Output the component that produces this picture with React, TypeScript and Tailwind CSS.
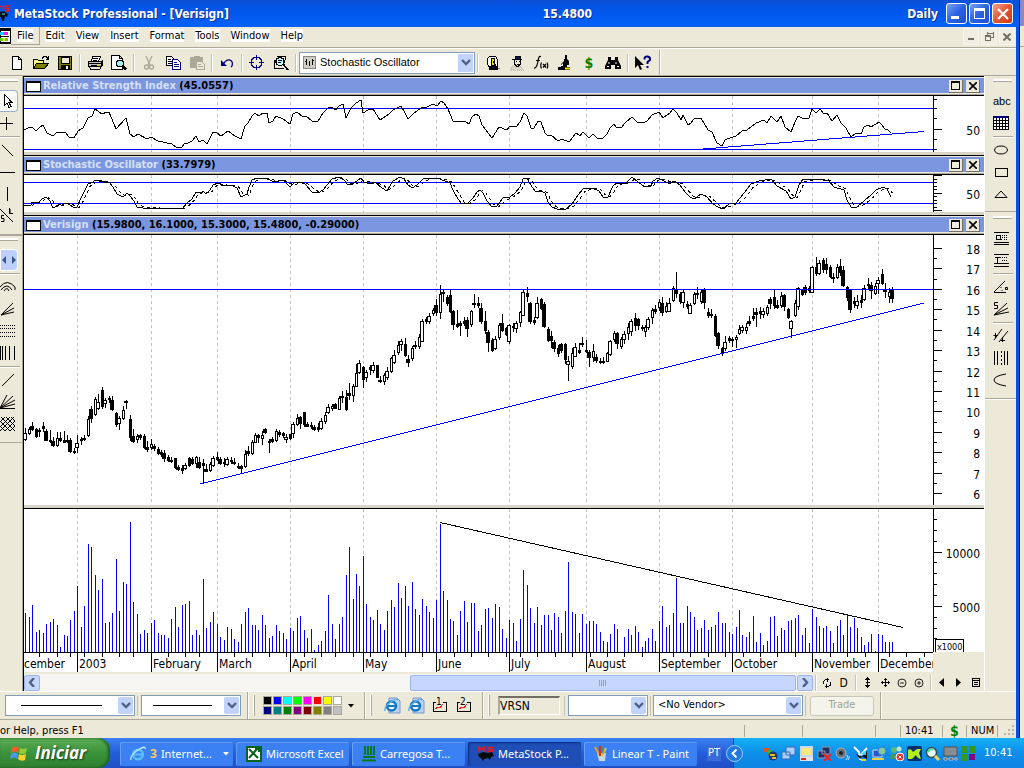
import type { ReactNode } from "react";

const FIRST_X = 25.2;
const BAR_STEP = 3.482;
const barX = (i: number) => Math.round(FIRST_X + i * BAR_STEP);

const months = [
  { name: "December", x: 24 },
  { name: "2003", x: 77 },
  { name: "February", x: 151 },
  { name: "March", x: 217 },
  { name: "April", x: 290 },
  { name: "May", x: 363 },
  { name: "June", x: 436 },
  { name: "July", x: 509 },
  { name: "August", x: 586 },
  { name: "September", x: 659 },
  { name: "October", x: 732 },
  { name: "November", x: 812 },
  { name: "December", x: 878 },
];

const monthColumns = months.map((m, i) => `minmax(0, ${(months[i + 1]?.x ?? 933) - m.x}fr)`).join(" ");

const weekTicks = [
  39, 57, 70, 84, 102, 119, 133, 168, 185, 199, 234, 252, 269, 286, 304, 321, 335, 353, 370, 387, 405, 422, 454, 471,
  488, 506, 520, 537, 555, 572, 590, 607, 624, 642, 673, 690, 708, 725, 743, 760, 777, 795, 830, 847, 865, 889, 906, 924,
];

const volume = [
  39, 35, 47, 20, 22, 19, 28, 30, 33, 27, 5, 17, 16, 32, 41, 66, 25, 46, 108, 105, 77, 62, 73, 29, 30, 39, 93, 41, 70, 68,
  130, 50, 38, 18, 22, 19, 29, 32, 19, 17, 17, 14, 33, 45, 25, 47, 48, 51, 17, 22, 17, 73, 24, 30, 40, 28, 15, 12, 25, 23,
  13, 10, 28, 40, 44, 27, 27, 22, 37, 27, 14, 16, 27, 21, 19, 13, 24, 21, 34, 36, 22, 14, 23, 2, 7, 11, 21, 57, 28, 13,
  28, 35, 77, 105, 53, 78, 66, 96, 48, 35, 32, 42, 28, 22, 41, 52, 45, 69, 54, 66, 46, 70, 43, 37, 53, 46, 40, 34, 52, 128,
  61, 52, 33, 31, 17, 41, 51, 30, 49, 49, 21, 27, 43, 44, 34, 48, 45, 23, 14, 32, 29, 11, 33, 82, 67, 44, 29, 45, 27, 37,
  37, 22, 39, 35, 19, 41, 90, 40, 38, 19, 38, 28, 31, 31, 28, 20, 11, 10, 18, 28, 23, 0, 15, 23, 17, 26, 20, 5, 11, 14,
  23, 11, 31, 46, 25, 27, 39, 74, 29, 29, 46, 40, 35, 22, 24, 32, 22, 25, 27, 40, 29, 29, 20, 18, 25, 42, 17, 15, 20, 36,
  10, 19, 7, 11, 35, 36, 16, 24, 22, 31, 32, 34, 37, 17, 24, 9, 43, 35, 26, 24, 26, 21, 9, 26, 32, 17, 37, 25, 34, 24,
  15, 7, 10, 18, 1, 18, 17, 10, 10, 10,
];

// high, body top, body bottom, low; "o" marks a hollow body
const candles = `
193,198,204,205o 192,194,198,199o 187,191,194,195 193,194,201,202 193,195,196,201 187,191,193,196 194,196,205,205
195,205,206,207 202,206,210,211 197,203,210,211o 197,203,205,206 196,205,207,207 200,205,206,207 203,205,216,217
213,216,217,218 200,208,212,217o 202,204,205,209 200,203,204,205 181,184,200,201o 171,174,183,187 162,164,179,180o
159,167,173,174o 152,155,171,173 163,165,168,172o 161,163,164,167 161,165,174,175 177,178,189,191 181,183,188,194o
171,175,183,184o 165,166,167,173 180,184,202,205 194,201,206,207 199,201,204,207o 199,200,202,204 199,201,212,213
206,212,214,216 204,209,212,214o 209,211,213,215 212,214,218,219 215,217,219,221 215,218,223,226 220,222,225,226
222,225,226,227 223,223,232,233 230,232,234,235 230,233,235,238 228,230,233,234o 222,223,230,231 222,224,228,229
221,222,228,232o 222,227,232,233 224,228,230,247 229,234,236,236 227,229,235,236o 221,223,230,231o 217,222,224,225
222,224,228,229 223,227,228,231 222,224,229,230o 222,225,226,228 223,227,228,229 228,231,232,233 230,231,233,238
215,219,231,232o 211,216,218,220 205,207,218,219o 198,200,207,207o 199,200,202,207 196,200,203,209o 193,194,197,198
204,206,207,217 202,204,206,207 194,196,205,206o 195,197,199,201 197,198,200,202 199,202,204,207o 199,199,203,204
187,189,198,202o 179,183,189,190o 181,182,188,193 177,177,189,191 187,189,191,191 187,190,191,193 190,192,194,195
188,192,194,196 183,186,193,194o 177,180,186,188o 169,172,177,178o 169,171,173,175o 168,169,173,173 161,163,174,174o
156,161,162,167 155,162,174,175 148,158,160,164 149,151,160,166o 129,138,151,151o 125,128,137,138o 131,132,144,152
135,137,142,146o 130,132,134,139 127,130,135,137o 130,130,142,142 141,145,146,147 138,140,146,149o 132,136,142,144o
122,123,136,137o 115,120,127,128o 106,110,117,119o 104,106,109,115o 103,109,120,121 120,124,127,131 111,113,123,125o
106,110,111,113 99,102,111,113o 84,86,106,106o 82,84,86,88 78,81,86,88o 73,75,78,80o 64,70,77,80 50,59,77,83o
55,57,58,66 60,62,68,70 55,60,76,77 75,76,89,94 75,89,91,92 86,88,90,100 82,86,88,90 82,85,93,101 75,76,89,91o
59,68,69,72 62,68,70,72 68,73,86,88 76,86,95,98 95,97,107,116 103,105,115,116 101,104,113,114o 88,90,102,104o
79,88,95,96 92,93,99,100 89,90,106,108o 88,91,92,96 86,88,93,97o 76,77,87,91o 54,57,80,80o 52,58,61,66 67,68,86,88
82,85,87,89 62,68,82,83o 63,64,73,74 67,69,91,92 92,94,105,106 96,101,105,112 105,107,113,116 110,113,118,121
108,109,115,117 108,109,124,128 121,126,129,145o 113,118,131,133o 108,112,121,121o 108,115,117,118 102,108,109,111
105,115,116,117 115,117,122,131 109,116,122,126o 119,122,125,127 123,126,127,128 122,126,127,128 117,118,126,126o
105,106,119,120o 96,98,104,106o 97,98,108,113 102,104,111,113o 96,99,104,108o 88,92,98,104o 84,86,96,100o 78,83,90,95
83,84,90,94 90,92,93,95 90,92,96,101o 82,84,92,94o 73,75,82,88o 70,74,76,78 64,67,72,75o 62,68,77,80 67,71,76,77o
63,68,76,76o 51,53,65,66o 37,54,58,62 57,59,66,68 55,57,67,72o 66,69,71,73 68,70,78,78o 57,59,68,69o 52,58,59,63
55,57,66,68o 53,54,67,73 73,77,80,82 74,79,80,82 79,81,100,101 97,98,110,113 112,113,118,120 101,107,113,115o
101,103,105,107 102,104,105,111 100,102,104,112o 90,94,98,99o 90,92,95,97o 88,92,95,98o 81,86,88,90 73,81,83,85
73,77,79,91 72,76,78,83 73,76,79,82o 70,72,78,80o 62,64,68,73 55,62,70,73 65,70,72,73 57,61,70,72o 59,60,71,75
73,74,82,83 85,86,93,102o 65,68,80,81o 52,53,71,74o 54,55,59,60 50,52,57,59 51,53,55,57 31,32,57,57o 22,32,38,40
25,28,38,39o 23,25,34,37 23,29,34,38 30,32,41,42 38,42,43,47 29,32,42,43o 24,31,37,40 31,35,50,51 51,52,62,65
54,54,74,77 62,66,68,72 60,66,70,73o 60,65,67,72 50,53,64,65o 43,49,50,53 47,50,55,63 48,51,58,59o 42,45,48,58o
34,39,48,49 48,54,56,62 53,57,61,67o 52,54,63,67`
  .trim()
  .split(/\s+/)
  .map((row) => {
    const [high, top, bottom, low] = row.replace("o", "").split(",").map(Number);
    return { high, top, bottom, low, hollow: row.endsWith("o") };
  });

const rsi =
  "24,130 28,128 32,127 36,131 40,127 43,125 47,133 53,136 57,132 61,133 65,132 69,137 74,138 78,131 83,128 88,118 92,116 95,109 102,114 107,112 109,112 116,129 126,118 130,134 134,137 138,134 147,139 151,137 158,141 172,144 176,147 182,147 184,144 188,143 192,141 196,136 199,142 203,140 207,144 213,132 217,133 221,136 228,131 235,136 241,139 245,126 248,123 252,116 255,113 259,116 263,113 267,113 269,123 273,121 276,116 283,119 290,124 293,114 297,112 303,117 306,116 312,121 318,121 323,113 329,107 333,108 336,110 339,106 343,104 346,118 351,108 356,103 361,100 363,113 368,110 373,109 380,120 389,114 393,110 401,106 405,113 408,119 413,114 422,107 427,107 433,104 437,106 441,101 444,103 448,109 453,121 461,122 465,121 469,124 472,117 476,114 479,116 482,125 492,138 499,127 507,130 510,126 517,126 520,122 524,113 527,116 531,128 534,128 538,121 541,122 545,133 548,136 551,135 558,141 562,139 569,142 576,133 580,136 583,132 589,138 593,134 597,138 603,138 607,134 610,128 614,124 617,128 622,127 625,123 632,117 637,122 643,123 647,121 652,115 659,112 663,118 667,115 670,113 673,109 677,113 681,120 683,115 688,125 691,123 694,119 701,118 708,130 712,132 717,143 722,146 725,140 727,139 736,136 742,131 747,130 756,123 764,120 767,123 771,116 777,122 781,116 785,127 791,132 795,122 798,116 802,118 809,118 812,109 816,113 820,109 824,114 827,113 832,121 837,115 841,123 846,128 851,137 856,133 861,134 864,127 868,125 871,127 879,122 882,125 885,129 887,129 891,133";

const stochastic =
  "24,205 31,205 32,202 36,203 39,202 42,199 46,197 50,201 53,208 57,206 60,204 62,206 64,203 68,204 75,208 77,207 81,198 85,190 88,184 93,182 95,180 99,181 110,183 113,187 117,194 123,197 127,193 130,196 134,201 137,207 143,208 158,208 161,209 165,208 182,209 187,203 192,199 196,192 202,192 203,191 206,194 210,190 213,185 218,183 223,186 228,185 233,186 237,188 241,197 247,194 249,187 252,180 257,178 267,179 275,182 283,180 290,187 295,182 300,182 305,184 312,192 318,193 323,190 327,185 332,179 339,177 344,180 348,185 353,184 361,178 364,182 370,184 375,182 382,188 387,191 393,181 400,177 404,179 408,185 412,188 417,185 423,179 430,178 437,178 445,181 450,183 453,190 458,199 462,204 468,203 473,198 477,192 480,190 483,193 487,201 492,207 497,206 503,198 510,197 515,193 520,187 523,179 527,178 532,187 536,192 541,191 545,193 548,202 552,207 557,209 566,209 572,204 578,195 583,189 592,188 599,191 603,197 608,197 613,186 617,183 625,184 632,177 638,182 645,187 651,186 653,181 658,178 664,181 670,184 674,181 680,185 685,192 690,197 694,199 701,194 707,197 713,204 718,207 723,209 729,204 736,203 744,193 751,184 759,181 771,179 777,186 786,191 791,199 795,197 799,185 803,179 817,179 829,181 834,187 844,190 847,200 851,207 857,207 864,201 871,195 876,190 883,187 887,189 891,197";

const signal = stochastic
  .split(" ")
  .map((p) => p.split(",").map(Number))
  .map(([x, y], i, all) => {
    const prev = all[Math.max(0, i - 1)];
    return `${x + 2},${(y * 0.6 + prev[1] * 0.4).toFixed(1)}`;
  })
  .join(" ");

function Ico({ w = 16, h = 16, children }: { w?: number; h?: number; children: ReactNode }) {
  return (
    <svg width={w} height={h} viewBox={`0 0 ${w} ${h}`} fill="none" stroke="#000" shapeRendering="crispEdges" className="shrink-0" aria-hidden="true">
      {children}
    </svg>
  );
}

/* ---------- charts ---------- */

function Plot({ top, height, children }: { top: number; height: number; children: ReactNode }) {
  return (
    <svg
      viewBox={`24 ${top} 909 ${height}`}
      preserveAspectRatio="none"
      height={height}
      className="block min-w-0 flex-1"
      shapeRendering="crispEdges"
      fill="none"
    >
      {months.slice(1).map((m) => (
        <path key={m.x} d={`M${m.x + 0.5} ${top}v${height}`} stroke="#c0c0c0" strokeDasharray="3 3" />
      ))}
      {children}
    </svg>
  );
}

function Candles() {
  return candles.map((c, i) => {
    const x = barX(i);
    // bodies take the whole slot, so they are one pixel wider before a four pixel step
    const width = barX(i + 1) - x;
    const left = x + 2 - width;
    return (
      <g key={i}>
        <rect x={x} y={c.high} width="1" height={c.low - c.high + 1} fill="#000" />
        {c.hollow ? (
          <rect x={left + 0.5} y={c.top + 0.5} width={width - 1} height={Math.max(1, c.bottom - c.top)} fill="#fff" stroke="#000" />
        ) : (
          <rect x={left} y={c.top} width={width} height={c.bottom - c.top + 1} fill="#000" />
        )}
      </g>
    );
  });
}

type AxisTick = { y: number; label?: string; major?: boolean };

function Axis({ height, ticks, children }: { height: number; ticks: AxisTick[]; children?: ReactNode }) {
  return (
    <svg width="51" height={height} className="block shrink-0" shapeRendering="crispEdges">
      <path d={`M.5 0v${height}`} stroke="#000" />
      {ticks.map((t) => (
        <g key={t.y}>
          <path d={`M1 ${t.y + 0.5}h${t.label || t.major ? 8 : 3}`} stroke="#000" />
          {t.label && (
            <text x="47" y={t.y + 6} textAnchor="end" className="text-xs">
              {t.label}
            </text>
          )}
        </g>
      ))}
      {children}
    </svg>
  );
}

function PanelTitle({ name, values }: { name: string; values: string }) {
  return (
    <div className="flex h-5 items-center border-y border-black bg-[#7b96df] shadow-[inset_0_1px_#ece9d8,inset_0_-1px_#aca899,inset_0_-2px_#ece9d8]">
      <span className="ml-0.5 h-[11px] w-[15px] border border-t-2 border-black bg-white" />
      <h2 className="ml-0.5 flex-1 text-[11px] leading-4 font-bold">
        <span className="text-[#d4e0f8]">{name}</span> {values}
      </h2>
      <button aria-label={`Maximize ${name}`} className="mr-[3px] flex h-[13px] w-[14px] items-center justify-center border-r border-b border-[#716f64] bg-[#ece9d8]">
        <Ico w={9} h={9}>
          <path d="M.5 1v7.500h8V1M0 1h9" />
          <path d="M0 .5h9" />
        </Ico>
      </button>
      <button aria-label={`Close ${name}`} className="mr-1 flex h-[13px] w-[14px] items-center justify-center border-r border-b border-[#716f64] bg-[#ece9d8]">
        <svg width="8" height="8" viewBox="0 0 8 8" stroke="#000" strokeWidth="1.600">
          <path d="M0 0l8 8M8 0L0 8" />
        </svg>
      </button>
    </div>
  );
}

function Panel({ children }: { children: ReactNode }) {
  return <div className="flex border-b-[3px] border-[#d8d5c6] bg-white">{children}</div>;
}

function Charts() {
  return (
    <div className="min-w-0 flex-1 border-l border-black bg-[#ece9d8]">
      <PanelTitle name="Relative Strength Index" values="(45.0557)" />
      <Panel>
        <Plot top={96} height={56}>
          <path d="M24 108.500h909M24 149.500h909M697 149.500L924 131.500" stroke="#0000ff" />
          <polyline points={rsi} stroke="#000" />
        </Plot>
        <Axis height={56} ticks={[{ y: 3 }, { y: 12 }, { y: 22 }, { y: 33, label: "50" }, { y: 43 }, { y: 53 }]} />
      </Panel>
      <PanelTitle name="Stochastic Oscillator" values="(33.7979)" />
      <Panel>
        <Plot top={175} height={37}>
          <path d="M24 182.500h909M24 203.500h909" stroke="#0000ff" />
          <polyline points={stochastic} stroke="#000" />
          <polyline points={signal} stroke="#000" strokeDasharray="3 3" />
        </Plot>
        <Axis
          height={37}
          ticks={[
            { y: 0, major: true },
            { y: 4 },
            { y: 7 },
            { y: 11 },
            { y: 14 },
            { y: 18, label: "50" },
            { y: 21 },
            { y: 25 },
            { y: 28 },
            { y: 32 },
            { y: 35, major: true },
          ]}
        />
      </Panel>
      <PanelTitle name="Verisign" values="(15.9800, 16.1000, 15.3000, 15.4800, -0.29000)" />
      <Panel>
        <Plot top={0} height={270}>
          <Candles />
          <path d="M24 54.500h909M200 249L924 68" stroke="#0000ff" />
        </Plot>
        <Axis
          height={270}
          ticks={Array.from({ length: 25 }, (_, i) => ({
            y: Math.round(13 + i * 10.21),
            label: i % 2 === 0 ? String(18 - i / 2) : undefined,
          }))}
        />
      </Panel>
      <div className="flex border-t border-black bg-white">
        <Plot top={0} height={143}>
          {volume.map((v, i) => (
            <rect key={i} x={barX(i)} y={143 - v} width="1" height={v} fill="#0000ff" />
          ))}
          <path d="M440 13.500L903 118.500" stroke="#000" />
        </Plot>
        <Axis
          height={143}
          ticks={Array.from({ length: 12 }, (_, i) => ({
            y: Math.round(10 + i * 10.85),
            label: i === 3 ? "10000" : i === 8 ? "5000" : undefined,
          }))}
        >
          <path d="M2.500 143v-12.500h27.500v12.500" stroke="#000" fill="#fff" />
          <text x="4" y="141" className="text-[9px]">
            x1000
          </text>
        </Axis>
      </div>
      <div className="mr-[51px] border-t border-black bg-white">
        <svg viewBox="24 0 909 4" preserveAspectRatio="none" height="4" className="block w-full" shapeRendering="crispEdges" stroke="#000">
          {weekTicks.concat(months.slice(1).map((m) => m.x)).map((x) => (
            <path key={x} d={`M${x + 0.5} 0v4`} />
          ))}
        </svg>
        <div className="grid h-4 border-b border-[#ece9d8] text-xs leading-[14px]" style={{ gridTemplateColumns: monthColumns }}>
          {months.map((m, i) => (
            <div key={m.x} className={i === 0 ? "flex justify-end overflow-hidden pr-3" : "overflow-hidden border-l border-black pl-px"}>
              {m.name}
            </div>
          ))}
        </div>
      </div>
      <ScrollRow />
    </div>
  );
}

function Chevron({ d = "M1 2l4 4 4-4" }: { d?: string }) {
  return (
    <svg width="10" height="9" viewBox="0 0 10 9" fill="none" stroke="#4d6185" strokeWidth="2.400" aria-hidden="true">
      <path d={d} />
    </svg>
  );
}

function Sep() {
  return <span className="mx-0.5 h-4 w-0.5 shrink-0 border-r border-white bg-[#c5c2b8]" />;
}

function ScrollRow() {
  return (
    <div className="mt-px flex h-[17px] items-center">
      <div className="flex h-full flex-1 items-center bg-[#f6f5f1]">
        <button aria-label="Scroll left" className="flex size-4 items-center justify-center rounded-xs border border-[#9db4ea] bg-[#c6d6fc]">
          <Chevron d="M7 0L3 4.500 7 9" />
        </button>
        <div className="h-full flex-[371]" />
        <div className="flex h-4 flex-[386] items-center justify-center gap-px rounded-xs border border-[#9db4ea] bg-[#c6d6fc]">
          {[0, 1, 2, 3].map((n) => (
            <span key={n} className="h-1.5 w-px border-r border-[#8ca4dc] bg-white" />
          ))}
        </div>
        <button aria-label="Scroll right" className="ml-px flex size-4 items-center justify-center rounded-xs border border-[#9db4ea] bg-[#c6d6fc]">
          <Chevron d="M3 0l4 4.500L3 9" />
        </button>
      </div>
      <div className="flex w-[171px] items-center">
        <Sep />
        <button aria-label="Refresh" className="flex w-4 justify-center">
          <Ico w={8} h={10}>
            <path d="M.5 6V3.500l2-2H6M4.500 0v4M7.500 4v3l-2 1.500H2M3.500 6v4" />
          </Ico>
        </button>
        <button aria-label="Periodicity" className="flex w-[18px] justify-center text-xs">
          D
        </button>
        <Sep />
        <button aria-label="Rescale Y" className="flex w-[18px] justify-center">
          <Ico w={7} h={11}>
            <path d="M3.500 0v11M2 1.500h3M1 2.500h5M1 8.500h5M2 9.500h3" />
            <path d="M1.500 5.500h4" />
          </Ico>
        </button>
        <button aria-label="Rescale" className="flex w-[18px] justify-center">
          <Ico w={9} h={9}>
            <path d="M4.500 0v9M0 4.500h9M3 1.500h3M3 7.500h3M1.500 3v3M7.500 3v3" />
          </Ico>
        </button>
        {["Zoom out", "Zoom in"].map((z) => (
          <button key={z} aria-label={z} className="flex w-[17px] justify-center">
            <svg width="10" height="10" viewBox="0 0 10 10" fill="none" stroke="#222">
              <circle cx="5" cy="5" r="4" />
              <path d={z === "Zoom in" ? "M3 5h4M5 3v4" : "M3 5h4"} />
            </svg>
          </button>
        ))}
        <Sep />
        <button aria-label="Back" className="flex w-4 justify-center">
          <svg width="5" height="9">
            <path d="M5 0v9L0 4.500z" />
          </svg>
        </button>
        <button aria-label="Forward" className="flex w-[18px] justify-center">
          <svg width="5" height="9">
            <path d="M0 0v9l5-4.500z" />
          </svg>
        </button>
        <button aria-label="Layouts" className="flex w-[17px] justify-center">
          <Ico w={8} h={9}>
            <path d="M.5.5h7v8h-7zM0 2.500h8M2 4.500h4M2 6.500h4" />
          </Ico>
        </button>
      </div>
    </div>
  );
}

/* ---------- window frame ---------- */

function TitleBar() {
  return (
    <header className="flex h-[27px] items-center bg-linear-to-b from-[#0a50d8] via-[#0058ee] to-[#0462f8] text-xs font-bold text-white [text-shadow:1px_1px_#0a2f8c]">
      <svg width="10" height="17" viewBox="0 0 10 17" aria-hidden="true" className="shrink-0">
        <path d="M0 1.500h2M3.500 0v5M5 1h4M5.500 1v2.500h3.500V6H5" stroke="#f01818" strokeWidth="1.500" fill="none" />
        <path d="M0 7l4-1 4 3-1 3-2-1-1 5H2l-1-4H0z" fill="#08101c" />
        <path d="M2 8h3v2H2z" fill="#347878" />
      </svg>
      <h1 className="ml-1 flex-1">MetaStock Professional - [Verisign]</h1>
      <span>15.4800</span>
      <span className="w-[346px] text-right">Daily</span>
      <div className="mr-1.5 ml-2 flex gap-0.5">
        <button aria-label="Minimize" className="flex size-[21px] items-end rounded-[3px] border border-white bg-linear-to-br from-[#7aa0f4] via-[#2a62e0] to-[#1c50d0] p-1">
          <span className="h-[3px] w-2 bg-white" />
        </button>
        <button aria-label="Restore" className="flex size-[21px] items-center justify-center rounded-[3px] border border-white bg-linear-to-br from-[#7aa0f4] via-[#2a62e0] to-[#1c50d0]">
          <span className="h-[11px] w-[11px] border border-t-[3px] border-white" />
        </button>
        <button aria-label="Close" className="flex size-[21px] items-center justify-center rounded-[3px] border border-white bg-linear-to-br from-[#f0a088] via-[#e25630] to-[#c83c14]">
          <svg width="12" height="12" viewBox="0 0 12 12" stroke="#fff" strokeWidth="2.200">
            <path d="M1 1l10 10M11 1L1 11" />
          </svg>
        </button>
      </div>
    </header>
  );
}

function MenuBar() {
  return (
    <nav className="flex h-[22px] items-start border-b border-white bg-[#ece9d8] shadow-[inset_0_-1px_#aca899]">
      <Ico w={11} h={18}>
        <path d="M0 1.500h10.500v15H0z" fill="#fff" />
        <path d="M0 2.500h11" strokeWidth="3" />
        <path d="M0 6.500h4" stroke="#00c8f0" strokeWidth="3" />
        <path d="M4 6.500h4" stroke="#f020f0" strokeWidth="3" />
        <path d="M0 12h8" stroke="#60d020" strokeWidth="3" />
        <path d="M3 12h2" stroke="#f0e020" strokeWidth="3" />
        <path d="M0 9.500h9M0 15.500h11" />
      </Ico>
      <div className="flex flex-1">
        {["File", "Edit", "View", "Insert", "Format", "Tools", "Window", "Help"].map((m, i) => (
          <button
            key={m}
            className={
              i === 0
                ? "h-[18px] border-r border-b border-[#aca899] px-1.5 text-[11px]"
                : "h-[18px] border-b border-transparent pr-1.5 pl-[5px] text-[11px]"
            }
          >
            <span className="block bg-white leading-[13px]">{m}</span>
          </button>
        ))}
      </div>
      <div className="mt-px mr-px flex gap-0.5">
        <button aria-label="Minimize chart" className="flex h-[17px] w-4 items-end justify-center border border-[#f6f5f0] bg-[#f0eee2] pb-1">
          <span className="h-0.5 w-1.5 bg-[#716f64]" />
        </button>
        <button aria-label="Restore chart" className="flex h-[17px] w-4 items-center justify-center border border-[#f6f5f0] bg-[#f0eee2]">
          <Ico w={9} h={9}>
            <path d="M.5 4.500h5v4h-5zM0 3.500h6M2 1h7M8.500 0v5.500H6M2.500 0v3" stroke="#716f64" />
          </Ico>
        </button>
        <button aria-label="Close chart" className="flex h-[17px] w-4 items-center justify-center border border-[#f6f5f0] bg-[#f0eee2]">
          <svg width="8" height="8" viewBox="0 0 8 8" stroke="#716f64" strokeWidth="2">
            <path d="M.5.5l7 7M7.500.5l-7 7" />
          </svg>
        </button>
      </div>
    </nav>
  );
}

function Tool({ label, children }: { label: string; children: ReactNode }) {
  return (
    <button aria-label={label} className="flex size-6 shrink-0 items-center justify-center">
      {children}
    </button>
  );
}

function ToolSep() {
  return <span className="mx-[2px] h-[18px] w-0.5 shrink-0 border-r border-white bg-[#c5c2b8]" />;
}

function Toolbar() {
  return (
    <div className="flex h-[27px] items-center border-b border-[#aca899] bg-[#ece9d8] pt-px pl-[5px]">
      <Tool label="New">
        <Ico>
          <path d="M3.500 1.500h6l3 3v10h-9zM9.500 1.500v3h3" fill="#fff" />
        </Ico>
      </Tool>
      <Tool label="Open">
        <Ico>
          <path d="M.5 13.500v-9h4l1 1h5v3" fill="#ffff80" />
          <path d="M.5 13.500l3-5h12l-4 5z" fill="#808000" />
          <path d="M9 3.500l2-2h2l2 2M15.500 1v4M13 4.500h2" />
        </Ico>
      </Tool>
      <Tool label="Save">
        <Ico>
          <path d="M1.500 1.500h13v13h-13z" fill="#808000" />
          <path d="M4 2h8v6H4z" fill="#ece9d8" />
          <path d="M4 10h8v4H4z" fill="#000" />
          <path d="M10 11v3" stroke="#fff" strokeWidth="2" />
        </Ico>
      </Tool>
      <ToolSep />
      <Tool label="Print">
        <Ico>
          <path d="M4.500 6.500l1-5h8l-2 5z" fill="#fff" />
          <path d="M6 3.500h5M6 5.500h4M1.500 6.500h13v5h-13z" fill="#c0c0c0" />
          <path d="M2 8.500h12M2.500 11.500l1 3h9l2-3M15.500 5v6M4 10.500h6" />
          <path d="M11 10.500h2" stroke="#e0e000" />
        </Ico>
      </Tool>
      <Tool label="Print preview">
        <Ico>
          <path d="M.5.5h8l3 3v11H.5zM8.500.5v3h3" fill="#fff" />
          <circle cx="9" cy="8.500" r="3.500" fill="#a0f0f0" />
          <path d="M11 11l4 4M12 11l3.500 3.500" strokeWidth="2" />
        </Ico>
      </Tool>
      <ToolSep />
      <Tool label="Cut">
        <svg width="16" height="16" viewBox="0 0 16 16" fill="none" stroke="#aca899" strokeWidth="1.300">
          <path d="M5 1l4 9M11 1L7 10" />
          <circle cx="5.500" cy="12" r="2" />
          <circle cx="10.500" cy="12" r="2" />
        </svg>
      </Tool>
      <Tool label="Copy">
        <Ico>
          <path d="M1.500 1.500h5l2 2v7h-7z" fill="#fff" />
          <path d="M3 4.500h3M3 6.500h4M3 8.500h4" />
          <path d="M7.500 4.500h5l3 3v7h-8z" fill="#fff" stroke="#000080" />
          <path d="M9 7.500h3M9 9.500h5M9 11.500h5" stroke="#000080" />
        </Ico>
      </Tool>
      <Tool label="Paste">
        <Ico>
          <path d="M1.500 2.500h12v10h-12zM4.500 1.500h6" fill="#aca899" stroke="#aca899" />
          <path d="M7.500 6.500h5l3 3v5h-8z" fill="#ece9d8" stroke="#aca899" />
          <path d="M9 9.500h3M9 11.500h5" stroke="#aca899" />
        </Ico>
      </Tool>
      <ToolSep />
      <Tool label="Undo">
        <svg width="16" height="16" viewBox="0 0 16 16" fill="none" stroke="#000080" strokeWidth="1.300">
          <path d="M4 9.500Q7 4.500 10.500 5q4 1 2.500 6l-1 1" />
          <path d="M2 5v6h6z" fill="#000080" stroke="none" />
        </svg>
      </Tool>
      <ToolSep />
      <Tool label="Target">
        <Ico>
          <path d="M7.500 0v5M7.500 10v5M0 7.500h5M10 7.500h5M5 2.500h5l2.500 2.500v5L10 12.500H5L2.500 10V5z" stroke="#000080" />
        </Ico>
      </Tool>
      <Tool label="Zoom">
        <Ico>
          <path d="M3.500 1.500h9v3M1.500 5v8.500h9" fill="none" />
          <circle cx="7" cy="6.500" r="4" fill="#c0ffff" strokeWidth="1.500" />
          <path d="M10 9l5 6M5 5.500h4M5 7.500h3" strokeWidth="1.800" />
        </Ico>
      </Tool>
      <ToolSep />
      <div className="relative flex">
        <select
          aria-label="Indicator"
          className="h-[22px] w-[176px] appearance-none border border-[#7f9db9] bg-white pl-5 font-['Liberation_Sans',Arial,sans-serif] text-[11px]"
        >
          <option>Stochastic Oscillator</option>
        </select>
        <span className="pointer-events-none absolute top-1 left-1 flex bg-[#d0cec4]">
          <Ico w={13} h={13}>
            <path d="M.5.5h12v12H.5z" stroke="#888" />
            <path d="M3.500 3v6M6.500 5v5M9.500 3v6M2 5.500h2M9 4.500h2" />
          </Ico>
        </span>
        <span className="pointer-events-none absolute top-0.5 right-0.5 flex h-[18px] w-[15px] items-center justify-center bg-[#c1d3fb]">
          <Chevron />
        </span>
      </div>
      <ToolSep />
      <Tool label="Downloader">
        <Ico>
          <path d="M4.500 1.500h6l2 3v8h-8l-2-3v-6z" fill="#fff" />
          <path d="M6 3h3v7H6z" fill="#f0e000" />
          <path d="M4 11h8v3H4zM8 6l3 5" fill="#000" />
          <path d="M13 13h2" stroke="#888" />
        </Ico>
      </Tool>
      <Tool label="Expert advisor">
        <Ico>
          <path d="M1 15l3-4h8l3 4z" stroke="#b8b5a8" fill="#d8d5c8" strokeDasharray="1 1" />
          <path d="M6 1h5v3H6z" fill="#0a1a60" />
          <path d="M3 4.500h10M5.500 5v4l2 2h2l2-2V5M7 6.500h1M10 6.500h1M8 9.500h2" />
        </Ico>
      </Tool>
      <Tool label="Indicator builder">
        <svg width="16" height="16" viewBox="0 0 16 16" fill="none" stroke="#000" strokeWidth="1.200">
          <path d="M8 1.500C6 .5 5.500 3 5 6S3.500 13.500 1 13M3 5.500h4M8.500 7.500Q7 10.500 8.500 13.500M14 7.500q1.500 3 0 6M10 9l3 3.500M13 9l-3 3.500" />
        </svg>
      </Tool>
      <Tool label="Explorer">
        <svg width="16" height="16" viewBox="0 0 16 16">
          <path d="M8 0h2v4l2 2v4h-2v2h3v3H1v-3h3V9l3-3V4h1z" />
          <path d="M3 11l3-3v3z" fill="#ece9d8" />
          <path d="M8 13.500h5" stroke="#f0e000" strokeWidth="2" />
        </svg>
      </Tool>
      <Tool label="System tester">
        <span className="text-sm font-bold text-[#008000]">$</span>
      </Tool>
      <Tool label="Find">
        <svg width="16" height="14" viewBox="0 0 16 14">
          <path d="M3 1h3v3h4V1h3v3l3 6v3h-6V9H6v4H0v-3l3-6z" />
          <path d="M2 10.500h2M12 10.500h2M4 6v2M11 6v2" stroke="#fff" />
        </svg>
      </Tool>
      <ToolSep />
      <Tool label="Help">
        <svg width="18" height="16" viewBox="0 0 18 16">
          <path d="M1 1v12l3-3 2 5 2-1-2-4h4z" />
          <path d="M10.500 4.500q0-3.500 3-3t2.500 3.500l-2.500 2v2M13.500 11v2" stroke="#000080" strokeWidth="2" fill="none" />
        </svg>
      </Tool>
      <span className="ml-1 h-full w-0.5 border-r border-white bg-[#aca899]" />
    </div>
  );
}

function Grip() {
  return <div className="mr-1 mb-2 h-[3px] border-b border-[#aca899] bg-white" />;
}

function SideSep() {
  return (
    <div className="flex h-[5px] items-center">
      <div className="h-0.5 w-5 border-b border-white bg-[#aca899]" />
    </div>
  );
}

type Drawing = { name: string; d: string; dash?: string; smooth?: boolean };

function DrawTool({ name, d, dash, smooth }: Drawing) {
  return (
    <button aria-label={name} className="flex h-[22px] w-full items-center">
      <svg width="16" height="16" viewBox="0 0 16 16" fill="none" stroke="#000" shapeRendering={smooth ? "auto" : "crispEdges"} aria-hidden="true">
        <path d={d} strokeDasharray={dash} />
      </svg>
    </button>
  );
}

const lineTools: Drawing[] = [
  { name: "Trendline", d: "M2 3l11 11", smooth: true },
  { name: "Horizontal line", d: "M0 8.500h15" },
  { name: "Vertical line", d: "M7.500 1v14" },
  { name: "Trading line", d: "M0 1l13 13M9.500 0v5.500H13M10 5.500V1M4 7.500H1.500v3H4v3H1", smooth: true },
];

const studyTools: Drawing[] = [
  { name: "Fibonacci arcs", d: "M0 8q7-9 15 0v3M1 11q6-8 11 0M4 12q3-5 5 0", smooth: true },
  { name: "Fibonacci fan", d: "M1 14L13 2M1 14L14 7M1 14l13-3", smooth: true },
  { name: "Fibonacci retracement", d: "M0 2.500h15M0 5.500h15M0 9.500h15M0 13.500h15", dash: "1 1" },
  { name: "Fibonacci time zones", d: "M.5 1v14M2.500 1v14M5.500 1v14M9.500 1v14M14.500 1v14" },
];

const gannTools: Drawing[] = [
  { name: "Gann line", d: "M2 14L14 2", smooth: true },
  { name: "Gann fan", d: "M0 14.500h15M0 14L7 1M0 14L13 2M0 14L15 6M0 14l15-4", smooth: true },
  {
    name: "Gann grid",
    d: "M0 6l5-5M0 11L10 1M0 15L14 1M5 15l10-10M10 15l5-5M0 10l5 5M0 5l10 10M1 1l14 14M6 1l9 9M11 1l4 4",
    smooth: true,
  },
];

const channelTools: Drawing[] = [
  { name: "Raff channel", d: "M1 12L9 1M6 14l9-11M2.500 5v5M.5 7.500H5M9.500 9v5M7.500 12.500H12", smooth: true },
  { name: "Standard deviation channel", d: "M1.500 1v14M4.500 1v14M11.500 1v14M14.500 1v14M8.500 1v2M8.500 5v2M8.500 9v2M8.500 13v2" },
  { name: "Quadrant", d: "M13 2Q1 4 1 8t12 6", smooth: true },
];

function LeftTools() {
  return (
    <aside className="flex w-[23px] shrink-0 flex-col border-r border-[#aca899]">
      <div className="border-b-2 border-[#aca899] pt-[3px] pb-[7px]">
        <Grip />
        <button aria-label="Pointer" className="mr-1 flex h-[22px] w-[18px] items-center rounded-r-sm border-y border-r border-[#98b0cc] bg-[#fbfbf8]">
          <Ico w={14} h={16}>
            <path d="M4.500 1.500v11l2.500-2.500 2 4.500 2-1-2-4h3z" fill="#fff" />
          </Ico>
        </button>
        <DrawTool name="Crosshair" d="M0 8.500h13M6.500 2v13" />
        <SideSep />
        {lineTools.map((t) => (
          <DrawTool key={t.name} {...t} />
        ))}
      </div>
      <div className="border-b border-[#aca899] pt-0.5 pb-[7px]">
        <Grip />
        <button aria-label="Move" className="flex h-[22px] w-[18px] items-center justify-center gap-1 rounded-r-sm border border-white bg-[#bcd0fb]">
          <svg width="14" height="8" viewBox="0 0 14 8" fill="#3a5688">
            <path d="M4 0v8L0 4zM10 0v8l4-4z" />
          </svg>
        </button>
        <SideSep />
        {studyTools.map((t) => (
          <DrawTool key={t.name} {...t} />
        ))}
        <SideSep />
        {gannTools.map((t) => (
          <DrawTool key={t.name} {...t} />
        ))}
      </div>
    </aside>
  );
}

function RightTools() {
  return (
    <aside className="w-8 shrink-0 border-l border-white">
      <div className="border-b border-[#aca899] pt-[3px] pb-1.5 pl-2">
        <Grip />
        <button aria-label="Text" className="flex h-[22px] items-center font-['Liberation_Sans',Arial,sans-serif] text-[11px]">
          abc
        </button>
        <button aria-label="Grid" className="flex h-[22px] items-center">
          <Ico w={17} h={16}>
            <path d="M.5 1.500h15v13H.5z" fill="#fff" />
            <path d="M1 2h14" stroke="#000080" strokeWidth="2" />
            <path d="M0 5.500h16M0 8.500h16M0 11.500h16M3.500 3v12M6.500 3v12M9.500 3v12M12.500 3v12" />
          </Ico>
        </button>
        <SideSep />
        <button aria-label="Ellipse" className="flex h-[22px] items-center">
          <svg width="16" height="16" fill="none" stroke="#000">
            <ellipse cx="8" cy="8" rx="6.500" ry="4" />
          </svg>
        </button>
        <DrawTool name="Rectangle" d="M2.500 4.500h12v8h-12z" />
        <DrawTool name="Triangle" d="M2 11.500h12L8 5z" smooth />
      </div>
      <div className="border-b border-[#aca899] pt-1 pb-[7px] pl-2 shadow-[0_1px_#fff]">
        <Grip />
        <DrawTool name="Quote" d="M1 2.500h15M3 5.500h4v4H3zM6 9.500h3M9 5.500h1M11 5.500h1M13 5.500h1M9 7.500h1M11 7.500h1M13 7.500h1M11 9.500h1M13 9.500h1M1 14.500h15M1 12.500h15" />
        <DrawTool name="Note" d="M1 2.500h15M2 5.500h6M4.500 6v5M9 5.500h1M11 5.500h1M13 5.500h1M9 8.500h1M11 8.500h1M13 8.500h1M1 11.500h15M1 14.500h15" />
        <SideSep />
        <DrawTool name="Angle" d="M1 13.500h12M1 13L12 2M12.500 8.500h2v2h-2zM8 8v1M9 11v1" smooth />
        <DrawTool name="Speed lines" d="M1 14L14 2M1 14l14-7M1 14l15-3M5 1.500H1.500v3h3v3H1" smooth />
        <SideSep />
        {channelTools.map((t) => (
          <DrawTool key={t.name} {...t} />
        ))}
      </div>
    </aside>
  );
}

const palette = [
  "bg-[#000000]", "bg-[#0000ff]", "bg-[#00ffff]", "bg-[#00ff00]", "bg-[#ff00ff]", "bg-[#ff0000]", "bg-[#ffff00]", "bg-[#ffffff]",
  "bg-[#000080]", "bg-[#008080]", "bg-[#008000]", "bg-[#800080]", "bg-[#800000]", "bg-[#808000]", "bg-[#808080]", "bg-[#c0c0c0]",
];

function Combo({ label, width, line, children }: { label: string; width: string; line?: string; children?: ReactNode }) {
  return (
    <div className={`relative flex ${width}`}>
      <select aria-label={label} className="h-[21px] w-full appearance-none border border-[#7f9db9] bg-white pl-1 text-[11px]">
        {children}
      </select>
      {line && <span className={`pointer-events-none absolute top-2.5 h-px bg-black ${line}`} />}
      <span className="pointer-events-none absolute top-0.5 right-0.5 flex h-[17px] w-[15px] items-center justify-center rounded-xs bg-[#c1d3fb]">
        <Chevron />
      </span>
    </div>
  );
}

function BarEnd() {
  return (
    <>
      <span className="h-full w-0.5 border-r border-white bg-[#aca899]" />
      <span className="mr-2 ml-1 h-[21px] w-0.5 border-r border-[#aca899] bg-white" />
    </>
  );
}

function IeLogo() {
  return (
    <svg width="17" height="17" viewBox="0 0 17 17" fill="none" aria-hidden="true">
      <path d="M5 1h8l3 3v12H5z" fill="#bcd0f4" stroke="#7c98d0" />
      <circle cx="7.500" cy="9" r="4.500" fill="#fff" stroke="#1478c4" strokeWidth="2.600" />
      <path d="M4 9h8" stroke="#1478c4" strokeWidth="2.200" />
      <path d="M1 14Q0 10 6 5.500T14 3" stroke="#58b0e8" strokeWidth="1.300" />
    </svg>
  );
}

function BottomBar() {
  return (
    <div className="flex h-7 items-center border-t border-white bg-[#ece9d8] pl-[5px]">
      <Combo label="Line style" width="w-[130px]" line="left-4 w-[81px]" />
      <span className="mx-0.5 h-5 w-px bg-[#c5c2b8]" />
      <Combo label="Line weight" width="ml-px w-[100px]" line="left-3 w-[59px]" />
      <span className="w-1.5" />
      <BarEnd />
      <div className="grid grid-cols-8 gap-px">
        {palette.map((c, i) => (
          <button
            key={c}
            aria-label={`Colour ${i + 1}`}
            className={`size-[9px] border ${i === 5 ? "border-[#ffd8d0]" : "border-[#aca899]"} ${c}`}
          />
        ))}
      </div>
      <svg width="6" height="4" className="mx-1.5">
        <path d="M0 0h6L3 3.500z" />
      </svg>
      <span className="w-1" />
      <BarEnd />
      <button aria-label="Web page" className="flex w-6 justify-center">
        <IeLogo />
      </button>
      <button aria-label="Online" className="flex w-6 justify-center">
        <IeLogo />
      </button>
      {["1", "2"].map((n) => (
        <button key={n} aria-label={`Chart ${n}`} className="relative flex w-6 justify-center">
          <Ico w={14} h={12}>
            <path d="M3 2.500H.5v8.500h12.500V2.500H10" />
            <path d="M2 9l3-2 2 1 3-4" stroke="#e02020" />
          </Ico>
          <span className="absolute -top-1 left-2 text-[10px] leading-3">{n}</span>
        </button>
      ))}
      <span className="w-1.5" />
      <BarEnd />
      <input
        aria-label="Symbol"
        defaultValue="VRSN"
        className="h-[19px] w-[62px] border-t-2 border-r border-b border-l-2 border-t-[#716f64] border-r-white border-b-white border-l-[#aca899] bg-[#ece9d8] text-xs"
      />
      <span className="mr-[3px] ml-1 h-5 w-px bg-[#c5c2b8]" />
      <Combo label="Quantity" width="w-20" />
      <span className="mx-[2px] h-5 w-px bg-[#c5c2b8]" />
      <Combo label="Vendor" width="w-[150px]">
        <option>&lt;No Vendor&gt;</option>
      </Combo>
      <span className="mx-0.5 h-5 w-px bg-[#c5c2b8]" />
      <button className="ml-0.5 h-5 w-16 rounded-[3px] border border-[#c9c7ba] bg-[#f5f4ea] text-[11px] text-[#a1a192]">Trade</button>
      <span className="ml-1.5 h-full w-0.5 border-r border-white bg-[#aca899]" />
    </div>
  );
}

function StatusBar() {
  return (
    <footer className="flex h-[18px] items-center border-t border-[#aca899] bg-[#ece9d8] pt-1 text-[11px] leading-3">
      <span className="flex-1">or Help, press F1</span>
      <span className="h-3 w-[58px] border-l border-[#aca899]" />
      <span className="h-3 w-[73px] border-l border-[#aca899]" />
      <span className="h-3 w-[25px] border-l border-[#aca899]" />
      <span className="w-[42px] border-l border-[#aca899] pl-1">10:41</span>
      <span className="w-6 border-l border-[#aca899] text-center text-sm leading-3 font-bold text-[#008000]">$</span>
      <span className="w-[31px] border-l border-[#aca899] pl-1">NUM</span>
      <span className="h-3 w-[7px] border-l border-[#aca899]" />
      <svg width="12" height="12" className="text-[#b8b5a5]" fill="currentColor">
        <path d="M8 0h2v2H8zM4 4h2v2H4zM8 4h2v2H8zM0 8h2v2H0zM4 8h2v2H4zM8 8h2v2H8z" />
      </svg>
    </footer>
  );
}

/* ---------- taskbar ---------- */

const tasks = [
  {
    name: "Internet...",
    count: "3",
    icon: (
      <svg width="16" height="16" viewBox="0 0 16 16" fill="none">
        <circle cx="8" cy="8.500" r="4.800" stroke="#58c0f8" strokeWidth="2.600" />
        <path d="M4 8.500h9" stroke="#58c0f8" strokeWidth="2" />
        <path d="M1 14Q0 9 8 4t7-1" stroke="#c0e8ff" strokeWidth="1.300" />
      </svg>
    ),
  },
  {
    name: "Microsoft Excel",
    icon: (
      <svg width="16" height="16" viewBox="0 0 16 16">
        <path d="M0 0h16v16H0z" fill="#0a6420" />
        <path d="M2 2h12v12H2z" fill="#fff" />
        <path d="M3 3l9 9M11 3l-8 9M9 3h4v3" stroke="#0a6420" strokeWidth="2" fill="none" />
      </svg>
    ),
  },
  {
    name: "Carregosa T...",
    icon: (
      <svg width="14" height="16" viewBox="0 0 14 16" stroke="#087818" strokeWidth="2">
        <path d="M3 0v9M6 0v9M9 0v9M12 0v9M1 11h12M0 14.500h14" />
      </svg>
    ),
  },
  {
    name: "MetaStock P...",
    active: true,
    icon: (
      <svg width="16" height="16" viewBox="0 0 16 16">
        <path d="M1 6V1l2.500 3L6 1v5M15 1.500h-4v2h4v2h-5" stroke="#e81818" strokeWidth="1.500" fill="none" />
        <path d="M0 8l5-2 5 1 4-1 2 4-3 1-1 3-2-2-4 1-1 2-2-3-2-1z" fill="#080808" />
      </svg>
    ),
  },
  {
    name: "Linear T - Paint",
    icon: (
      <svg width="14" height="16" viewBox="0 0 14 16">
        <path d="M3 7h9l-1 8H5z" fill="#c8d8e0" />
        <path d="M1 1l5 9" stroke="#e8a020" strokeWidth="2" />
        <path d="M6 0v10" stroke="#d03020" strokeWidth="2" />
        <path d="M12 2L8 10" stroke="#e8c040" strokeWidth="2" />
        <path d="M9 0v8" stroke="#30a050" />
      </svg>
    ),
  },
];

const trayIcons: ReactNode[] = [
  <g key="0">
    <path d="M1 2h5v4H1z" fill="#d85828" />
    <path d="M5 4h4v5H5z" fill="#48a838" />
    <circle cx="10" cy="10" r="4.500" fill="#203878" />
    <path d="M7 9h5M9 12h4" stroke="#e0c030" strokeWidth="2" />
  </g>,
  <g key="1">
    <path d="M5 1h9v8H5zM1 6h8v7H1z" fill="#a8d0f8" stroke="#3868b8" />
  </g>,
  <g key="2">
    <path d="M2 1h11v9H2z" fill="#f8e880" stroke="#c8d8f0" strokeWidth="2" />
    <path d="M1 11h13v4H1z" fill="#e0e4e8" />
    <path d="M2 13h5" stroke="#e02818" strokeWidth="2" />
  </g>,
  <g key="3">
    <path d="M5 1h8v7H5zM1 5h7v7H1z" fill="#203060" stroke="#8898b8" />
    <path d="M7 8l7 7M14 8l-7 7" stroke="#f02020" strokeWidth="2" />
  </g>,
  <g key="4">
    <circle cx="6" cy="7" r="5" fill="#6c7078" stroke="#b0b4bc" />
    <circle cx="6" cy="7" r="2" fill="#202428" />
    <path d="M12 9q2 2-1 5M14 10q1 2-1 4" stroke="#c8e0f8" fill="none" />
  </g>,
  <g key="5">
    <path d="M1 1l5 5 1 8M14 2L8 9" stroke="#fff" strokeWidth="2" />
    <path d="M3 8l4 5 7-8v8z" fill="#081018" />
    <path d="M8 8l5-4v5z" fill="#48d8e8" />
    <path d="M8 14h5" stroke="#f0d820" strokeWidth="2" />
  </g>,
  <g key="6">
    <path d="M2 4h9v7H2z" fill="#2858c8" stroke="#d0dcf0" />
    <circle cx="11" cy="5" r="4" fill="#88c8a0" stroke="#3080d0" />
    <path d="M1 13h12" stroke="#e8d048" strokeWidth="2" />
  </g>,
  <g key="7">
    <circle cx="5" cy="4" r="3" fill="#58b878" />
    <circle cx="10" cy="3" r="2.500" fill="#c0e8d0" />
    <path d="M1 13q0-6 5-5l3 5z" fill="#409868" />
    <circle cx="11" cy="11" r="4" fill="#e83020" stroke="#fff" />
    <path d="M9.500 9.500l3 3M12.500 9.500l-3 3" stroke="#fff" />
  </g>,
  <g key="8">
    <rect width="15" height="15" rx="2" fill="#083068" />
    <path d="M1 13V4q3-2 5 2l4-3h4l-2 4 2 6q-4-1-5-4l-4 4z" fill="#b0f018" />
  </g>,
  <g key="9">
    <circle cx="6.500" cy="6.500" r="5" fill="#e8fcff" stroke="#38484c" strokeWidth="1.500" />
    <path d="M3 6q2-4 5-2" stroke="#48d890" strokeWidth="2" fill="none" />
    <path d="M10 10l4 4" stroke="#f0d858" strokeWidth="3" />
  </g>,
  <g key="10">
    <path d="M1 1h13v9H1z" fill="#888c90" stroke="#505458" />
    <path d="M1 12h3v2H1zM6 12h4v2H6zM12 12h2v2h-2z" fill="#202428" stroke="#c0c4c8" />
  </g>,
  <g key="11">
    <path d="M0 0h7v7H0zM8 0h7v7H8zM0 8h7v7H0z" fill="#38981c" />
    <path d="M8 8h6v6H8z" fill="#800878" />
  </g>,
];

function Taskbar() {
  return (
    <div className="flex h-[30px] items-stretch bg-linear-to-b from-[#3a80f0] via-[#245edb] to-[#1f4fc4] text-[11px] text-white">
      <button className="flex w-[110px] shrink-0 items-center rounded-r-xl bg-linear-to-b from-[#5aac56] via-[#3a933a] to-[#2f7f30] pl-2.5 shadow-[inset_-2px_0_3px_#1c5c1c]">
        <svg width="19" height="19" viewBox="0 0 19 19" aria-hidden="true">
          <path d="M2 4q4-3 7 0L8 9Q5 6 1 9z" fill="#f06028" />
          <path d="M10 4q3 2 7 0l-1 5q-4 2-7 0z" fill="#90d030" />
          <path d="M1 10q3-3 7 0l-1 5q-3-3-7 0z" fill="#4898f0" />
          <path d="M9 10q3 2 7 0l-1 6q-4 2-7-1z" fill="#f8d030" />
        </svg>
        <span className="ml-1.5 font-['Open_Sans',sans-serif] text-[17px] leading-6 font-bold italic [text-shadow:1px_1px_2px_#183c18]">Iniciar</span>
      </button>
      <div className="ml-2.5 flex min-w-0 flex-1 items-center gap-[3px] pt-px">
        {tasks.map((t) => (
          <button
            key={t.name}
            className={`flex h-6 min-w-0 flex-1 items-center gap-1 rounded-xs pl-2.5 text-left font-['Noto_Sans',sans-serif] whitespace-nowrap ${
              t.active ? "bg-[#1e4eb6] shadow-[inset_1px_1px_2px_#0c2c80]" : "bg-[#3c81f3] shadow-[inset_1px_1px_#62a0fa]"
            }`}
          >
            {t.icon}
            <span className="min-w-0 flex-1 leading-4">
              {t.count && <b className="mr-1 text-xs text-[#f8c868]">{t.count}</b>}
              {t.name}
            </span>
            {t.count && (
              <svg width="6" height="4" fill="#fff" className="mr-1 shrink-0">
                <path d="M0 0h6L3 3.500z" />
              </svg>
            )}
          </button>
        ))}
      </div>
      <span className="mr-3 ml-2.5 flex w-3.5 items-center justify-center self-center bg-[#3a6cd8]">PT</span>
      <div className="flex w-[291px] shrink-0 items-center border-l border-[#0a50b8] bg-linear-to-b from-[#18b0f4] via-[#0d8fea] to-[#0f84e0]">
        <button aria-label="Show hidden icons" className="relative -ml-2 flex size-[17px] shrink-0 items-center justify-center rounded-full border border-[#9cd4ff] bg-[#2078e0]">
          <svg width="7" height="9" fill="none" stroke="#fff" strokeWidth="2">
            <path d="M5.500.5l-4 4 4 4" />
          </svg>
        </button>
        <div className="ml-5 flex gap-[3px]">
          {trayIcons.map((icon, i) => (
            <svg key={i} width="15" height="15" viewBox="0 0 15 15" fill="none" aria-hidden="true">
              {icon}
            </svg>
          ))}
        </div>
        <time className="ml-2">10:41</time>
      </div>
    </div>
  );
}

export default function App() {
  return (
    <div className="flex min-h-screen w-full flex-col overflow-hidden bg-[#ece9d8] font-['DejaVu_Sans_Condensed','DejaVu_Sans',sans-serif] text-black">
      <div className="flex flex-1">
        <div className="flex min-w-0 flex-1 flex-col">
          <TitleBar />
          <div className="flex-1 border-r-[3px] border-[#0a50e0]">
            <MenuBar />
            <Toolbar />
            <div className="flex">
              <LeftTools />
              <Charts />
              <RightTools />
            </div>
            <BottomBar />
            <StatusBar />
          </div>
        </div>
        <div className="w-[5px] border-l border-[#06206c]">
          <div className="h-[26px] bg-[#8c88c8]" />
          <div className="h-5" />
          <div className="h-px bg-[#aca899]" />
        </div>
      </div>
      <Taskbar />
    </div>
  );
}
